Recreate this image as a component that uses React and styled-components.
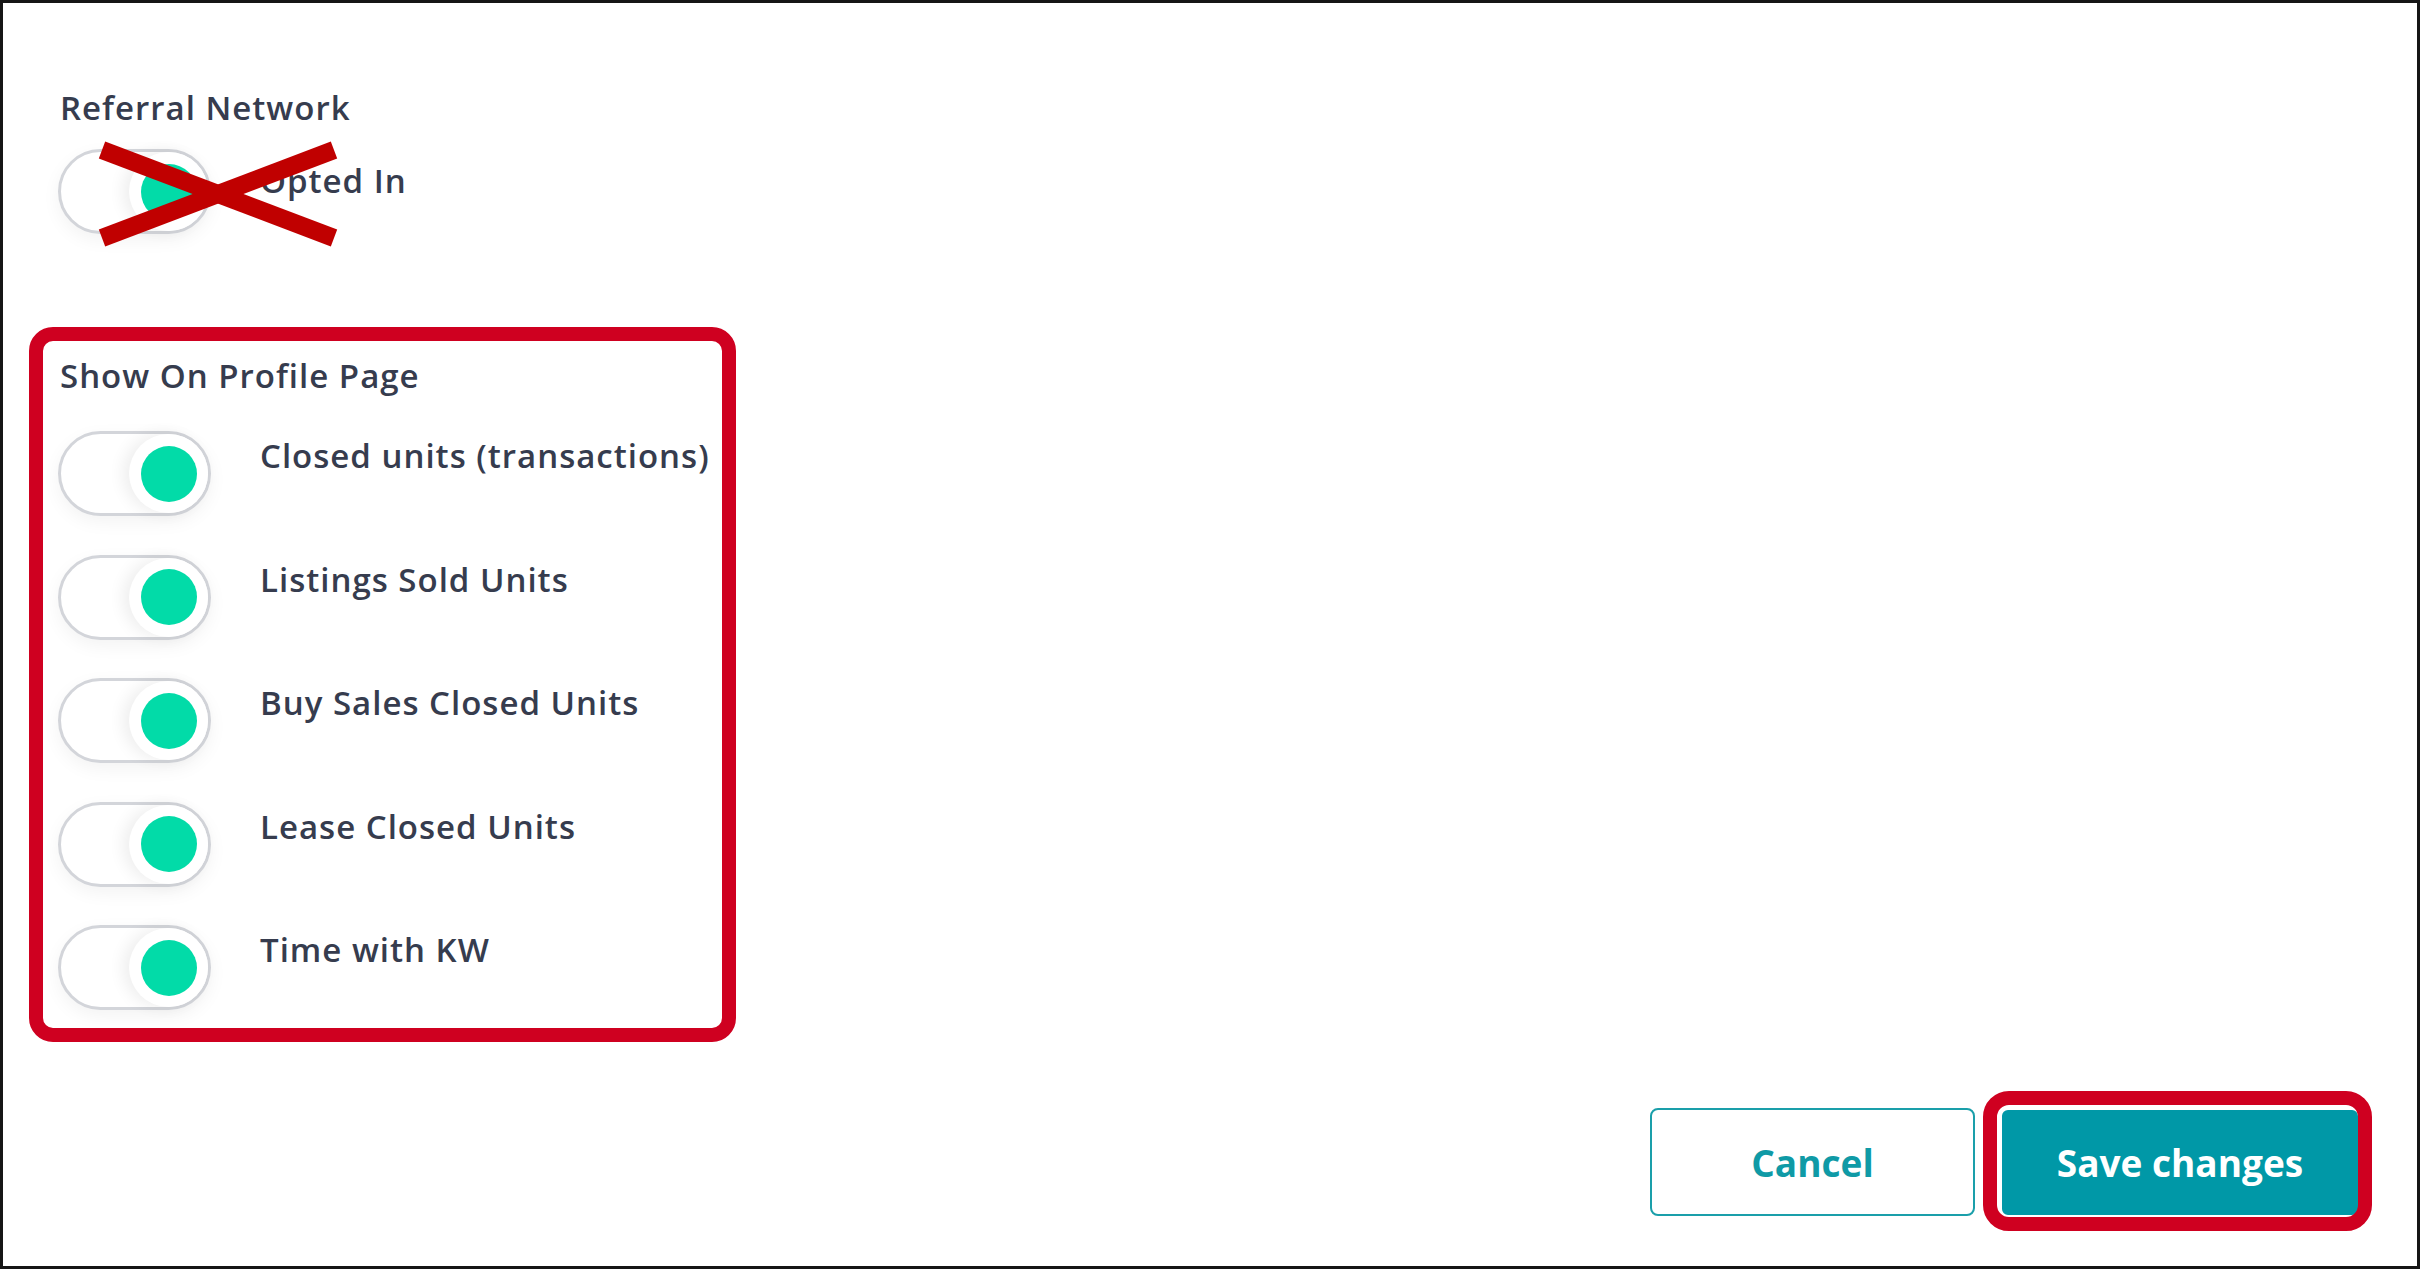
import React from "react";
import styled, { createGlobalStyle } from "styled-components";

const GlobalStyle = createGlobalStyle`
  body {
    margin: 0;
    background: #ffffff;
    font-family: "Open Sans", "Noto Sans", sans-serif;
  }
`;

const profileItems = [
  "Closed units (transactions)",
  "Listings Sold Units",
  "Buy Sales Closed Units",
  "Lease Closed Units",
  "Time with KW",
];

const Toggle = () => (
  <Track>
    <Knob>
      <Dot />
    </Knob>
  </Track>
);

const App = () => {
  return (
    <>
      <GlobalStyle />
      <Frame>
        <Section>
          <SectionTitle gap={21}>Referral Network</SectionTitle>
          <Row>
            <Toggle />
            <Label offset={12}>Opted In</Label>
            {/* annotation: crossed-out */}
            <Cross viewBox="0 0 232 100" width="232" height="100">
              <line x1="0" y1="6" x2="232" y2="94" />
              <line x1="0" y1="94" x2="232" y2="6" />
            </Cross>
          </Row>
        </Section>

        <HighlightSection>
          <SectionTitle gap={35}>Show On Profile Page</SectionTitle>
          <List>
            {profileItems.map((item) => (
              <Row key={item}>
                <Toggle />
                <Label offset={5}>{item}</Label>
              </Row>
            ))}
          </List>
        </HighlightSection>

        <Footer>
          <CancelButton>Cancel</CancelButton>
          <SaveButton>Save changes</SaveButton>
        </Footer>
      </Frame>
    </>
  );
};

// Styled Components
const Frame = styled.div`
  box-sizing: border-box;
  width: 2420px;
  height: 1269px;
  border: 3px solid #161616;
  padding: 85px 57px 49px 57px;
  display: flex;
  flex-direction: column;
  align-items: flex-start;
`;

const Section = styled.div`
  display: flex;
  flex-direction: column;
  position: relative;
`;

const HighlightSection = styled(Section)`
  margin-top: 122px;

  &::before {
    content: "";
    position: absolute;
    top: -29px;
    left: -31px;
    width: 707px;
    height: 715px;
    box-sizing: border-box;
    border: 14px solid #cf0020;
    border-radius: 24px;
    pointer-events: none;
  }
`;

const SectionTitle = styled.div`
  font-size: 33px;
  line-height: 40px;
  font-weight: 600;
  letter-spacing: 1px;
  color: #363c4e;
  margin-bottom: ${(p) => p.gap}px;
`;

const List = styled.div`
  display: flex;
  flex-direction: column;
  gap: 38.5px;
`;

const Row = styled.div`
  display: flex;
  align-items: flex-start;
  gap: 49px;
  position: relative;
`;

const Label = styled.span`
  font-size: 33px;
  line-height: 40px;
  font-weight: 600;
  letter-spacing: 1px;
  color: #363c4e;
  margin-top: ${(p) => p.offset}px;
  white-space: nowrap;
`;

const Track = styled.div`
  box-sizing: border-box;
  width: 153px;
  height: 85px;
  margin-left: -2px;
  border: 3px solid #d3d5da;
  border-radius: 43px;
  background: #ffffff;
  display: flex;
  align-items: center;
  justify-content: flex-end;
  box-shadow: 0 6px 18px rgba(0, 0, 0, 0.05);
`;

const Knob = styled.div`
  width: 79px;
  height: 79px;
  border-radius: 50%;
  background: #ffffff;
  display: flex;
  align-items: center;
  justify-content: center;
  box-shadow: -6px 0 16px rgba(0, 0, 0, 0.07);
`;

const Dot = styled.div`
  width: 56px;
  height: 56px;
  border-radius: 50%;
  background: #02dba8;
`;

const Cross = styled.svg`
  position: absolute;
  left: 42px;
  top: -5px;
  overflow: visible;

  line {
    stroke: #c00000;
    stroke-width: 18;
    stroke-linecap: butt;
  }
`;

const Footer = styled.div`
  margin-top: auto;
  align-self: flex-end;
  display: flex;
  gap: 25px;
`;

const BaseButton = styled.button`
  box-sizing: border-box;
  height: 108px;
  border-radius: 8px;
  font-family: "Open Sans", "Noto Sans", sans-serif;
  font-size: 37px;
  font-weight: 700;
  cursor: pointer;
`;

const CancelButton = styled(BaseButton)`
  width: 325px;
  background: #ffffff;
  border: 2px solid #1a9faa;
  color: #0f9aa6;
`;

const SaveButton = styled(BaseButton)`
  width: 360px;
  height: 109px;
  background: #0098a7;
  border: 2px solid #ffffff;
  color: #ffffff;
  position: relative;

  &::after {
    content: "";
    position: absolute;
    top: -19px;
    left: -19px;
    right: -14px;
    bottom: -16px;
    border: 14px solid #cf0020;
    border-radius: 26px;
    pointer-events: none;
  }
`;

export default App;
